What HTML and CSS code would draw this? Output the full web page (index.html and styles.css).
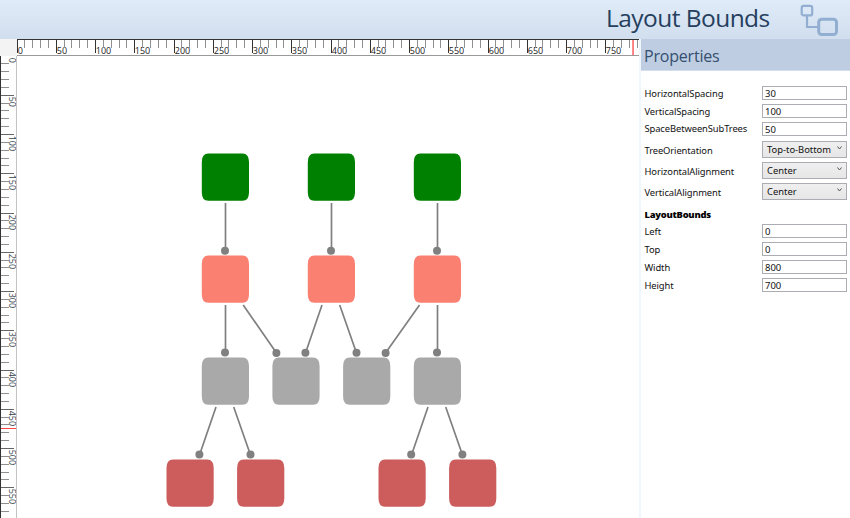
FILE: index.html
```html
<!DOCTYPE html>
<html lang="en">
<head>
<meta charset="utf-8">
<title>Layout Bounds</title>
<link rel="stylesheet" href="styles.css">
</head>
<body>
<header class="header">
  <h1>Layout Bounds</h1>
  <svg class="logo" width="40" height="34" viewBox="0 0 40 34">
    <path d="M7 13V24H18"/>
    <rect x="1.700" y="2.900" width="10.500" height="9.500" rx="2"/>
    <rect class="big" x="18.700" y="16.200" width="17.800" height="15.300" rx="3"/>
  </svg>
</header>
<div class="main">
  <section class="workspace">
    <svg class="ruler-top" id="ruler-top" width="622" height="17"></svg>
    <svg class="ruler-left" id="ruler-left" width="18" height="462"></svg>
    <svg class="canvas" width="621" height="462" viewBox="18 56 621 462">
      <g class="links">
        <path d="M225.5 203V250M331.5 203V250M437.5 203V250"/>
        <path d="M225.5 305V352M243.200 305L276.500 353M322 305L305.500 353M339.700 305L356.500 353M419.500 305L385.500 353M437.500 305V352"/>
        <path d="M216 407L199.500 455M233.700 407L250.500 455M428 407L411.500 455M445.700 407L462.500 455"/>
      </g>
      <g class="dots">
        <circle cx="225" cy="250.800" r="4"/><circle cx="331" cy="250.800" r="4"/><circle cx="437" cy="250.800" r="4"/>
        <circle cx="225" cy="352.600" r="4"/><circle cx="276.400" cy="353" r="4"/><circle cx="305.400" cy="352.800" r="4"/><circle cx="356.500" cy="352.800" r="4"/><circle cx="385.600" cy="353" r="4"/><circle cx="437" cy="352.600" r="4"/>
        <circle cx="199.400" cy="454.600" r="4"/><circle cx="250.500" cy="454.600" r="4"/><circle cx="411.200" cy="454.600" r="4"/><circle cx="462.400" cy="454.600" r="4"/>
      </g>
      <g class="green">
        <path d="M208.300 153.500h34.200q6.500 0 6.500 8.500v30.200q0 8.500-6.500 8.500h-34.200q-6.500 0-6.500-8.500v-30.200q0-8.500 6.500-8.500z" id="node"/>
        <use href="#node" x="106"/><use href="#node" x="212"/>
      </g>
      <g class="salmon"><use href="#node" y="102"/><use href="#node" x="106" y="102"/><use href="#node" x="212" y="102"/></g>
      <g class="gray"><use href="#node" y="204"/><use href="#node" x="70.600" y="204"/><use href="#node" x="141.300" y="204"/><use href="#node" x="212" y="204"/></g>
      <g class="red"><use href="#node" x="-35.300" y="306"/><use href="#node" x="35.300" y="306"/><use href="#node" x="176.700" y="306"/><use href="#node" x="247.300" y="306"/></g>
    </svg>
  </section>
  <aside class="panel">
    <h2>Properties</h2>
    <div class="form">
      <div class="row"><label>HorizontalSpacing</label><div class="field">30</div></div>
      <div class="row"><label>VerticalSpacing</label><div class="field">100</div></div>
      <div class="row raised"><label>SpaceBetweenSubTrees</label><div class="field">50</div></div>
      <div class="row select"><label>TreeOrientation</label><div class="combo">Top-to-Bottom<svg width="5" height="4"><path d="M.5.5L2.500 3L4.500.5"/></svg></div></div>
      <div class="row select"><label>HorizontalAlignment</label><div class="combo">Center<svg width="5" height="4"><path d="M.5.5L2.500 3L4.500.5"/></svg></div></div>
      <div class="row select"><label>VerticalAlignment</label><div class="combo">Center<svg width="5" height="4"><path d="M.5.5L2.500 3L4.500.5"/></svg></div></div>
      <h3>LayoutBounds</h3>
      <div class="row"><label>Left</label><div class="field">0</div></div>
      <div class="row"><label>Top</label><div class="field">0</div></div>
      <div class="row"><label>Width</label><div class="field">800</div></div>
      <div class="row"><label>Height</label><div class="field">700</div></div>
    </div>
  </aside>
</div>
<script src="rulers.js"></script>
</body>
</html>
```
FILE: styles.css
```css
* { box-sizing: border-box; }
body {
  margin: 0;
  width: 850px;
  height: 518px;
  overflow: hidden;
  background: #fff;
  font-family: "Noto Sans", "Open Sans", sans-serif;
  color: #111;
}
.header {
  height: 39px;
  display: flex;
  justify-content: flex-end;
  align-items: flex-start;
  padding-right: 10px;
  background: linear-gradient(#dfebf8, #d1deee);
}
.header h1 {
  margin: 0 29px 0 0;
  width: 165px;
  font: 400 24.5px/35px "Open Sans", sans-serif;
  letter-spacing: -.55px;
  color: #263f5e;
  white-space: nowrap;
}
.logo { margin-top: 3px; fill: none; stroke: #92aed0; stroke-width: 2.2; }
.logo .big { stroke-width: 3; }
.main { display: flex; height: 479px; }
.workspace {
  width: 639px;
  flex: none;
  overflow: hidden;
  display: grid;
  grid-template-columns: 18px 622px;
  grid-template-rows: 17px 462px;
  background: linear-gradient(#f3f3f3, #f3f3f3) 0 0 / 17px 17px no-repeat;
}
.ruler-top { grid-column: 2; margin-left: -1px; background: #fff; }
.ruler-left { grid-column: 1; grid-row: 2; background: #fff; }
.canvas { grid-column: 2; grid-row: 2; background: #fff; }
.tick { stroke: #909090; stroke-width: 1; }
.tick.major { stroke: #333; }
.ruler-left .tick.major { stroke: #666; }
.label { font: 9px "Open Sans", sans-serif; fill: #222; }
.ruler-left .label { fill: #33424a; }
.axis { fill: #333; }
.edge { fill: #999; }
.ruler-left .edge { fill: #c3c3c3; }
.marker { fill: #f44; }
.links { fill: none; stroke: #808080; stroke-width: 1.700; }
.dots { fill: #808080; }
.green { fill: #008000; }
.salmon { fill: #fa8072; }
.gray { fill: #a9a9a9; }
.red { fill: #cd5c5c; }
.panel { width: 211px; border-left: 2px solid #eff6fc; }
.panel h2 {
  margin: 0;
  height: 32px;
  padding-left: 3px;
  font: 400 16px/34px "Open Sans", sans-serif;
  letter-spacing: -.2px;
  color: #354f70;
  background: #becde1;
  border-bottom: 1px solid #d3dfef;
}
.form { padding: 13px 3px 0 3.500px; font-size: 9.400px; }
.row { display: flex; justify-content: space-between; align-items: center; height: 18px; }
.row label { position: relative; top: .5px; letter-spacing: -.1px; white-space: nowrap; }
.row.raised label { margin-top: -3px; }
.row.select { height: 21px; }
.row.select:nth-child(4) { margin-top: 1px; }
.field, .combo { width: 85px; border: 1px solid #abadb3; padding-left: 2px; }
.field { height: 14px; line-height: 13px; background: #fff; font-size: 9.500px; }
.combo {
  height: 17px;
  line-height: 15px;
  padding: 0 4px;
  display: flex;
  justify-content: space-between;
  background: linear-gradient(#efefef, #e6e6e6);
}
.combo svg { margin-top: 4px; fill: none; stroke: #555; stroke-width: 1; }
.form h3 { margin: 5px 0 0; height: 15px; font: 800 9.400px/16px "Open Sans", sans-serif; color: #000; letter-spacing: -.25px; }
```
FILE: rulers.js
```js
const NS = "http://www.w3.org/2000/svg";

function add(svg, name, attrs, text) {
  const el = document.createElementNS(NS, name);
  for (const key in attrs) el.setAttribute(key, attrs[key]);
  if (text !== undefined) el.textContent = text;
  svg.appendChild(el);
}

// Major marks are 50 units apart, with four minor marks between them.
const STEP = 7.85;
const across = document.getElementById("ruler-top");
for (let i = 0; i < 80; i++) {
  const x = Math.floor(i * STEP) + 0.5;
  const major = i % 5 === 0;
  add(across, "line", { class: major ? "tick major" : "tick", x1: x, x2: x, y1: 1, y2: major ? 14 : 9 });
  if (major) add(across, "text", { class: "label", x: x + 0.3, y: 15 }, i * 10);
}
add(across, "rect", { class: "axis", x: 0, y: 0, width: 622, height: 1 });
add(across, "rect", { class: "edge", x: 0, y: 16, width: 622, height: 1 });
add(across, "rect", { class: "marker", x: 615.4, y: 1, width: 1.3, height: 15 });

const down = document.getElementById("ruler-left");
for (let i = 0; i < 60; i++) {
  const y = Math.floor(i * STEP) + 0.5;
  const major = i % 5 === 0;
  if (i > 0) add(down, "line", { class: major ? "tick major" : "tick", y1: y, y2: y, x1: 1, x2: major ? 14 : 9 });
  if (major) add(down, "text", { class: "label", transform: `translate(9.3 ${y + 1.2}) rotate(90)` }, i * 10);
}
add(down, "rect", { class: "axis", x: 0, y: 0, width: 1, height: 462 });
add(down, "rect", { class: "edge", x: 16, y: 0, width: 1, height: 462 });
add(down, "rect", { class: "marker", x: 1, y: 372, width: 15, height: 1 });
```
